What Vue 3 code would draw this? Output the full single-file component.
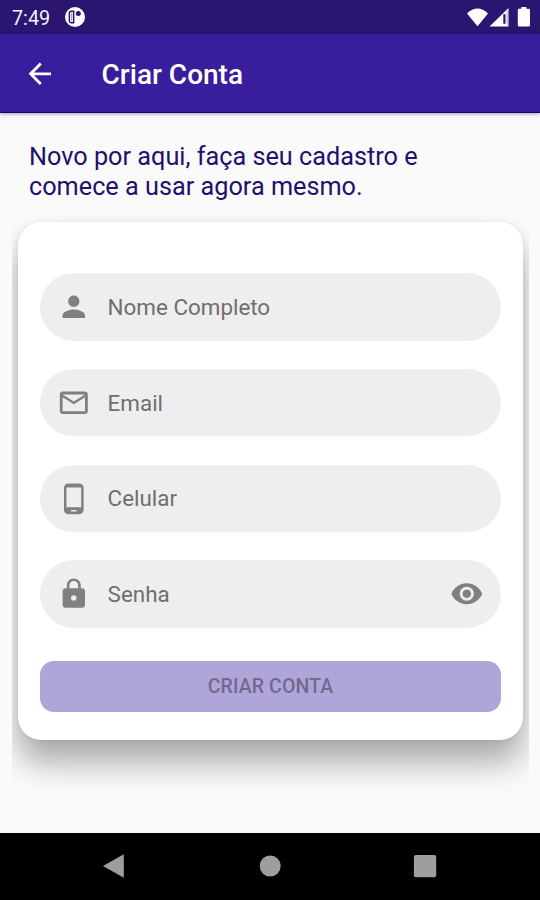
<template>
    <div class="screen">
        <div class="statusBar">
            <span class="clock">7:49</span>
            <svg class="appMark" viewBox="0 0 20 20">
                <circle cx="10" cy="10" r="10" fill="#fff"/>
                <path d="M8.7 4.3H6.2a1.9 1.9 0 0 0-1.9 1.9v7.6a1.9 1.9 0 0 0 1.9 1.9h2.5z" fill="none" stroke="#2a1670" stroke-width="1.4"/>
                <path d="M5.8 5.6h1.6v8.8H5.8z" fill="#a79fc9"/>
                <circle cx="13.3" cy="6.6" r="2.5" fill="#2a1670"/>
            </svg>
            <svg class="signals" viewBox="0 0 66 22">
                <path d="M1 6.4Q11.5-3.6 22 6.4L11.5 19.3z" fill="#fff"/>
                <path d="M23.5 19.5L42.5 1v18.5z" fill="#fff"/>
                <path d="M37.3 7.2h2.2v9.6h-2.2z" fill="#2a1670"/>
                <path d="M41.2 4v14" stroke="#aaa3cb" stroke-width="1"/>
                <path d="M55.3 0h5v1.7h2.4q1.3 0 1.3 1.3v15q0 1.5-1.5 1.5h-9.2q-1.5 0-1.5-1.5V3q0-1.3 1.3-1.3h2.2z" fill="#fff"/>
            </svg>
        </div>

        <div class="appBar">
            <svg class="backArrow" viewBox="0 0 24 24">
                <path d="M20 11H7.83l5.59-5.59L12 4l-8 8 8 8 1.41-1.41L7.83 13H20v-2z"/>
            </svg>
            <h1 class="title">Criar Conta</h1>
        </div>

        <div class="content">
            <p class="intro">
                Novo por aqui, faça seu cadastro e<br>
                comece a usar agora mesmo.
            </p>

            <form class="card" @submit.prevent>
                <div class="field" v-for="item in fields" :key="item.label">
                    <svg class="fieldIcon" viewBox="0 0 24 24">
                        <path :d="item.icon"/>
                    </svg>
                    <span class="fieldLabel">{{ item.label }}</span>
                    <svg v-if="item.secret" class="fieldIcon" viewBox="0 0 24 24">
                        <path :d="eyeIcon"/>
                    </svg>
                </div>
                <button class="submitButton" type="submit" disabled>CRIAR CONTA</button>
            </form>
        </div>

        <div class="navBar">
            <svg viewBox="0 0 24 24"><path d="M1 12L21.8 .3v23.4z"/></svg>
            <svg viewBox="0 0 24 24"><circle cx="12.2" cy="12" r="10.5"/></svg>
            <svg viewBox="0 0 24 24"><rect x=".9" y=".9" width="22.3" height="22.3" rx="2"/></svg>
        </div>
    </div>
</template>

<script setup>
const fields = [
    {
        label: 'Nome Completo',
        icon: 'M12 12c2.21 0 4-1.79 4-4s-1.79-4-4-4-4 1.79-4 4 1.79 4 4 4zm0 2c-2.67 0-8 1.34-8 4v2h16v-2c0-2.66-5.33-4-8-4z'
    },
    {
        label: 'Email',
        icon: 'M20 4H4c-1.1 0-1.99.9-1.99 2L2 18c0 1.1.9 2 2 2h16c1.1 0 2-.9 2-2V6c0-1.1-.9-2-2-2zm0 14H4V8l8 5 8-5v10zm-8-7L4 6h16l-8 5z'
    },
    {
        label: 'Celular',
        icon: 'M16 1H8C6.34 1 5 2.34 5 4v16c0 1.66 1.34 3 3 3h8c1.66 0 3-1.34 3-3V4c0-1.66-1.34-3-3-3zm-2 20h-4v-1h4v1zm3.25-3H6.75V4h10.5v14z'
    },
    {
        label: 'Senha',
        icon: 'M18 8h-1V6c0-2.76-2.24-5-5-5S7 3.24 7 6v2H6c-1.1 0-2 .9-2 2v10c0 1.1.9 2 2 2h12c1.1 0 2-.9 2-2V10c0-1.1-.9-2-2-2zm-6 9c-1.1 0-2-.9-2-2s.9-2 2-2 2 .9 2 2-.9 2-2 2zm3.1-9H8.9V6c0-1.71 1.39-3.1 3.1-3.1 1.71 0 3.1 1.39 3.1 3.1v2z',
        secret: true
    }
]

const eyeIcon = 'M12 4.5C7 4.5 2.73 7.61 1 12c1.73 4.39 6 7.5 11 7.5s9.27-3.11 11-7.5c-1.73-4.39-6-7.5-11-7.5zM12 17c-2.76 0-5-2.24-5-5s2.24-5 5-5 5 2.24 5 5-2.24 5-5 5zm0-8c-1.66 0-3 1.34-3 3s1.34 3 3 3 3-1.34 3-3-1.34-3-3-3z'
</script>

<style>
body {
    margin: 0;
}
</style>

<style scoped>
.screen {
    width: 540px;
    height: 900px;

    display: flex;
    flex-direction: column;
    overflow: hidden;

    background-color: #fafafa;
    font-family: 'Roboto', sans-serif;
}

.statusBar {
    height: 34px;
    flex-shrink: 0;
    padding: 0 8px 0 12px;

    display: flex;
    align-items: center;

    background-color: #2a1670;
    box-sizing: border-box;
}

.clock {
    font-size: 19.8px;
    line-height: 34px;
    margin-top: 3px;
    color: #f4f2fa;
}

.appMark {
    width: 20px;
    height: 20px;
    margin-left: 15px;
}

.signals {
    width: 66px;
    height: 22px;
    margin-left: auto;
    margin-top: 2px;
}

.appBar {
    height: 79px;
    flex-shrink: 0;
    padding-left: 23px;

    display: flex;
    align-items: center;

    background-color: #381e9c;
    border-bottom: 1px solid #120681;
    box-sizing: border-box;
    box-shadow: 0 1px 4px rgba(0, 0, 0, 0.35);
}

.backArrow {
    width: 33.6px;
    height: 33.6px;
    margin-top: 1px;
    fill: #fff;
}

.title {
    margin: 2px 0 0 45px;
    font-weight: 500;
    font-size: 28px;
    color: #fff;
}

/* the list clips the card shadow at its sides */
.content {
    flex: 1;
    margin: 0 11px 0 12px;
    overflow: hidden;
}

.intro {
    margin: 29px 0 0 17px;
    font-size: 25.25px;
    line-height: 29.5px;
    color: #22106f;
    white-space: nowrap;
}

.card {
    margin: 21px 6px 0;
    height: 518px;
    padding: 51.3px 22px 0;

    display: flex;
    flex-direction: column;

    background-color: #fff;
    border-radius: 23px;
    box-sizing: border-box;
    box-shadow:
        0 0 5px rgba(0, 0, 0, 0.08),
        0 22px 32px rgba(0, 0, 0, 0.33);
}

.field {
    height: 67.4px;
    margin-bottom: 28.3px;
    padding: 0 17px;
    flex-shrink: 0;

    display: flex;
    align-items: center;

    background-color: #eee;
    border-radius: 34px;
    box-sizing: border-box;
}

.fieldIcon {
    width: 33.6px;
    height: 33.6px;
    fill: #808080;
}

.fieldLabel {
    flex: 1;
    margin-left: 17px;
    font-size: 22.4px;
    color: #6f6f6f;
}

.submitButton {
    height: 51px;
    margin-top: 5px;
    flex-shrink: 0;

    background-color: #b0a5d8;
    border: none;
    border-radius: 14px;

    font-family: inherit;
    font-weight: 500;
    font-size: 19.5px;
    letter-spacing: 0.1px;
    color: #72698f;
}

.navBar {
    height: 67px;
    flex-shrink: 0;
    padding: 0 103px 1px 102px;

    display: flex;
    align-items: center;
    justify-content: space-between;

    background-color: #000;
    box-sizing: border-box;
}

.navBar svg {
    width: 24px;
    height: 24px;
    fill: #9e9e9e;
}
</style>
